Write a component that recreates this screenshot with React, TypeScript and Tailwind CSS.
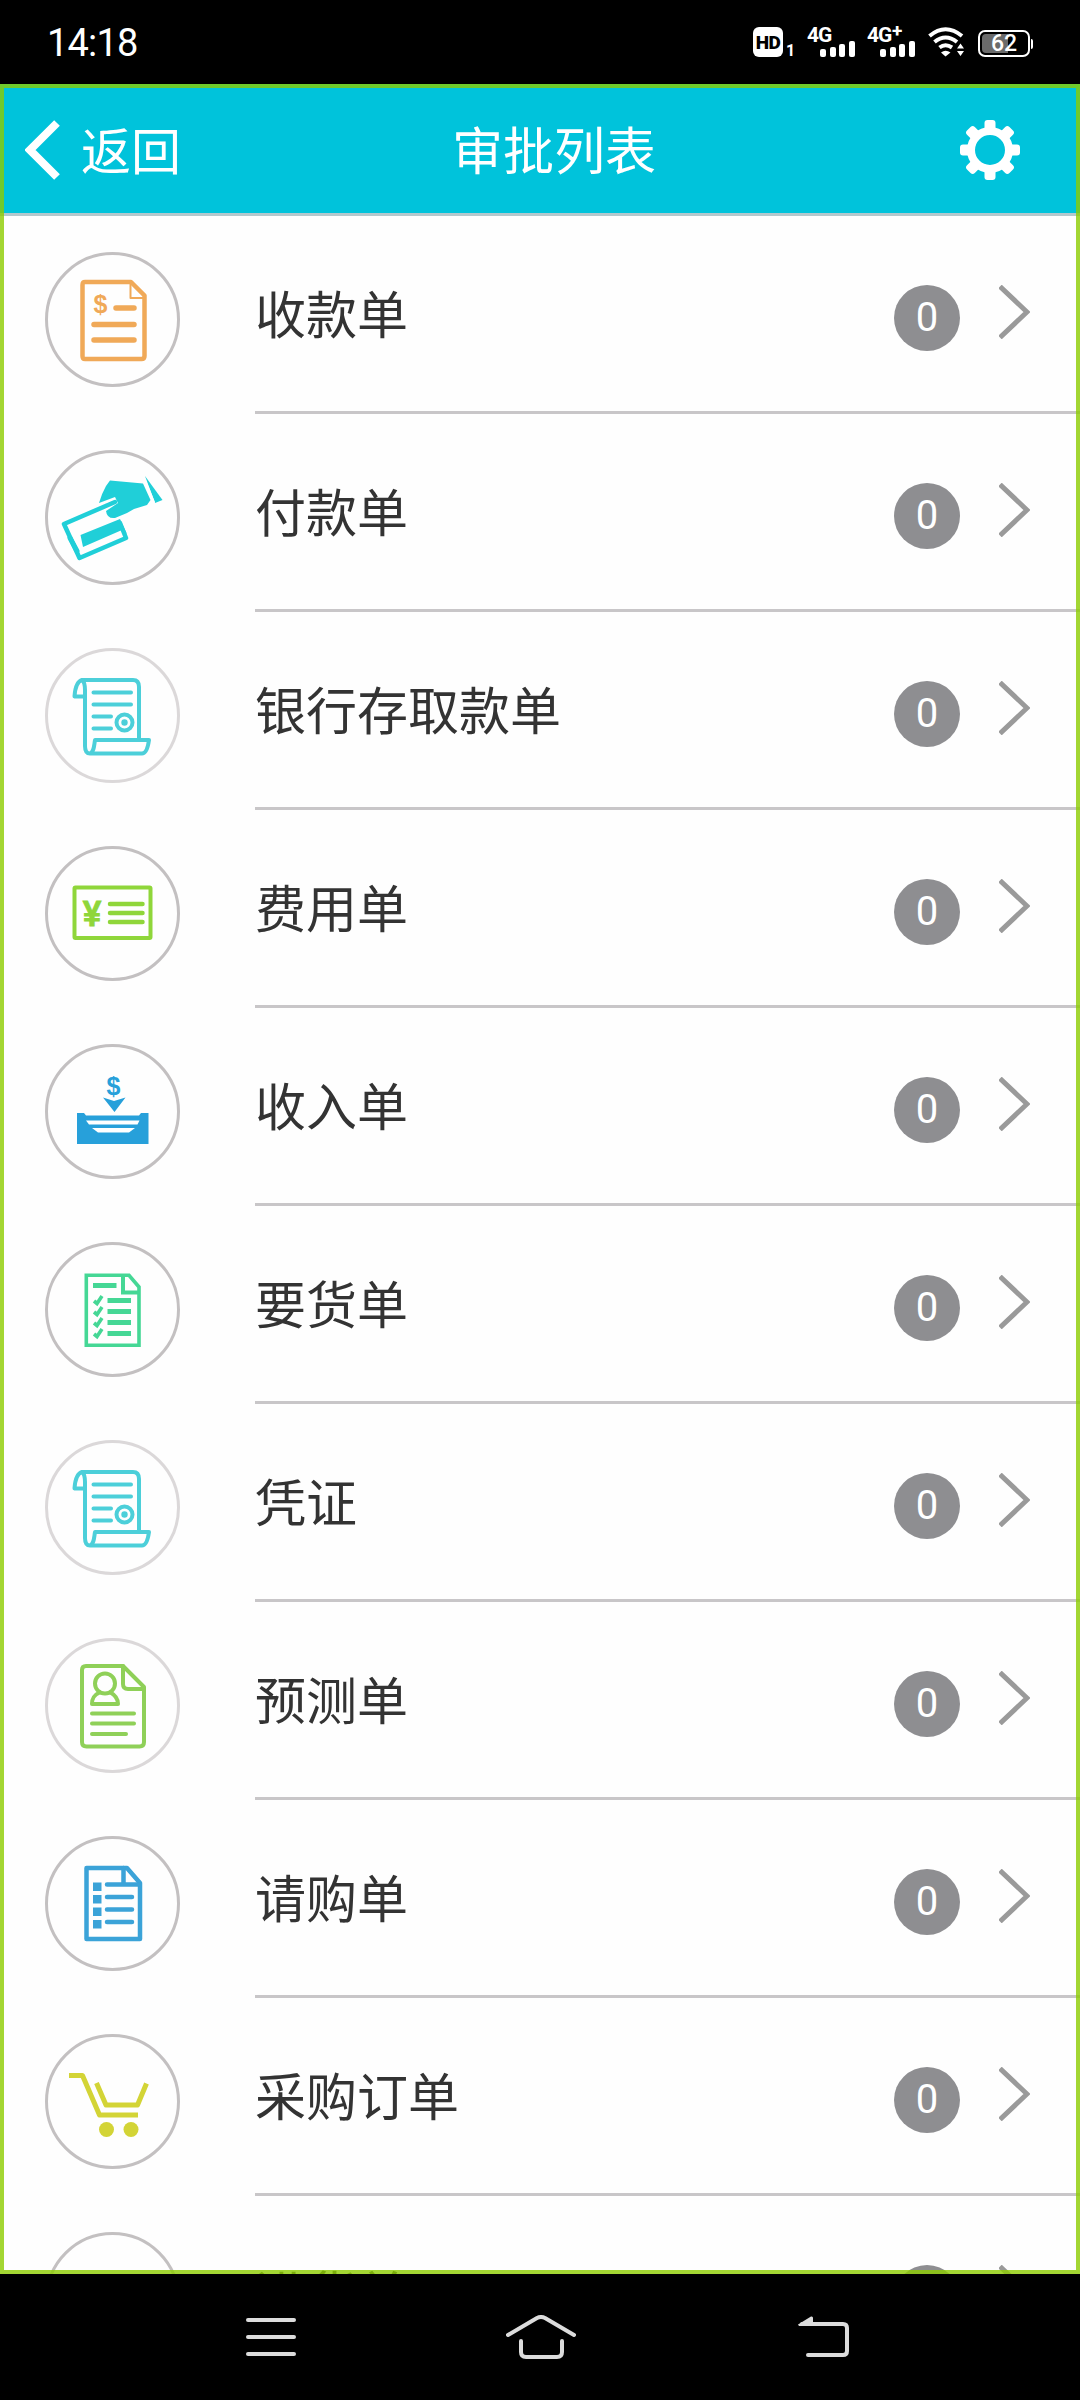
import type { ReactNode } from "react"

const stroke = {
  fill: "none",
  stroke: "currentColor",
  strokeLinecap: "round",
  strokeLinejoin: "round",
} as const

function ReceiptIcon() {
  return (
    <svg viewBox="0 0 135 135" className="w-full h-full text-[#f0a958]">
      <g {...stroke} strokeWidth="4.5">
        <path d="M40 30H86L99.5 43.5V104Q99.5 107 96.5 107H40Q37.5 107 37.5 104V33Q37.5 30 40 30Z" />
        <path d="M85.5 31V46H99" strokeWidth="2" />
        <path d="M71 56H89M49 72.5H89M49 88H89" strokeWidth="5.5" />
      </g>
      <text x="55.5" y="61" textAnchor="middle" fontSize="25" fontWeight="700" fill="currentColor" className="font-['Liberation_Sans',sans-serif]">
        $
      </text>
    </svg>
  )
}

function PayCardIcon() {
  return (
    <svg viewBox="0 0 135 135" className="w-full h-full text-[#20cfd8]">
      <path {...stroke} strokeWidth="4.5" d="M70 52L19 74L34.5 108L81 88L75 73" />
      <path {...stroke} strokeWidth="5" d="M25 88L32 101" />
      <path fill="currentColor" d="M35.500 85L75 69L82 84L77 80L38 97Z" />
      <path fill="currentColor" d="M65 30.5L98 33.5L105.5 50L102 55L89 59L82 63L70 68Q62 69 61 61L73 53L70 47L54 53Q57 43 61 36Z" />
      <path fill="currentColor" d="M100 26L117.5 50L110 53Z" />
      <path d="M100 31L109 53" stroke="#fff" strokeWidth="2.5" />
    </svg>
  )
}

function ScrollIcon() {
  return (
    <svg viewBox="0 0 135 135" className="w-full h-full text-[#4ccfd9]">
      <g {...stroke} strokeWidth="4">
        <path d="M37.5 32H88Q94 32 94 39V91" />
        <path d="M37.5 32C32 33 30 41 29.5 48.5H39" />
        <path d="M37.5 32C40 35 40 38 40 42V98Q40 105.5 45 105.5C49 104 49 98 50 92H104C103 99 101 105.5 97 105.5H45" />
        <path d="M48.5 44.5H86M48.5 56.5H86M48.5 68.5H66M48.5 80.5H66" />
        <circle cx="79.5" cy="74.5" r="8" />
      </g>
      <circle cx="79.5" cy="74.5" r="3.2" fill="currentColor" />
    </svg>
  )
}

function YuanBillIcon() {
  return (
    <svg viewBox="0 0 135 135" className="w-full h-full text-[#8fd63a]">
      <g {...stroke} strokeWidth="4">
        <rect x="29.5" y="41.5" width="76" height="50.5" rx="1" />
        <path d="M65 58H97.5M65 67H97.5M65 76H97.5" strokeWidth="4.5" />
      </g>
      <text x="47" y="80" textAnchor="middle" fontSize="35" fontWeight="500" stroke="currentColor" fill="currentColor" className="font-['Roboto',sans-serif]">
        ¥
      </text>
    </svg>
  )
}

function IncomeIcon() {
  return (
    <svg viewBox="0 0 135 135" className="w-full h-full text-[#27a0da]">
      <text x="68.5" y="51" textAnchor="middle" fontSize="25" fontWeight="700" fill="currentColor" className="font-['Liberation_Sans',sans-serif]">
        $
      </text>
      <path fill="currentColor" d="M58 53.5L69 57L80.5 53.5L69.5 68Z" />
      <path fill="currentColor" d="M32 69H39L41 71.5H94L96 69H103.5V100H32Z" />
      <path fill="#fff" d="M41 76.5H94.5L92.5 80.5H44Z" />
      <path fill="#fff" d="M47 84H90L84 88.5H53Z" />
    </svg>
  )
}

function ChecklistIcon() {
  return (
    <svg viewBox="0 0 135 135" className="w-full h-full text-[#45d795]">
      <g fill="none" stroke="currentColor" strokeWidth="3.6">
        <path d="M41.3 33.3H84L94 45V103.2H41.3Z" />
        <path d="M78 33V50.5H94" strokeWidth="4" />
        <path d="M48 43.5H71.5M62.5 58.5H86M62.5 69.5H86M62.5 80.5H86M62.5 91.5H86" strokeWidth="5" />
        <path d="M49 59L52 61.5L57 54M49 70L52 72.5L57 65M49 81L52 83.5L57 76M49 92L52 94.5L57 87" />
      </g>
    </svg>
  )
}

function ProfileDocIcon() {
  return (
    <svg viewBox="0 0 135 135" className="w-full h-full text-[#8fd058]">
      <g {...stroke} strokeWidth="4">
        <path d="M41 28H78L99 49V104Q99 108.5 94.5 108.5H41.5Q37 108.5 37 104V32Q37 28 41 28Z" />
        <path d="M78 28V46Q78 51 83 51H99" />
        <circle cx="60" cy="45.5" r="10" />
        <path d="M54.5 54.5C49 57 47 60 47 66H73C73 60 70 57 65.5 54.5" />
        <path d="M47 75.5H89M47 85.5H89M47 96H81" />
      </g>
    </svg>
  )
}

function ListDocIcon() {
  return (
    <svg viewBox="0 0 135 135" className="w-full h-full text-[#3ba3d8]">
      <g {...stroke} strokeWidth="4.5">
        <path d="M41.5 32H82L95 47V103H41.5Z" />
        <path d="M78.5 32V48.5M62 48.5H94M62 61H87M62 73.5H87M62 86H87" />
      </g>
      <path fill="currentColor" d="M48 46.5h8.5v8.5h-8.5zM48 59h8.5v8.5h-8.5zM48 71.5h8.5v8.5h-8.5zM48 84h8.5v8.5h-8.5z" />
    </svg>
  )
}

function CartIcon() {
  return (
    <svg viewBox="0 0 135 135" className="w-full h-full text-[#d3d436]">
      <g {...stroke} strokeWidth="5" strokeLinecap="butt">
        <path d="M24 41.5H37.5L54.5 81H93" />
        <path d="M51.5 49L61 71H92.5L101.5 49.5" />
      </g>
      <circle cx="61.5" cy="95.5" r="7.5" fill="currentColor" />
      <circle cx="86" cy="95.5" r="7.5" fill="currentColor" />
    </svg>
  )
}

interface Item {
  label: string
  count?: number
  icon?: ReactNode
  pale?: boolean
}

const items: Item[] = [
  { label: "收款单", count: 0, icon: <ReceiptIcon /> },
  { label: "付款单", count: 0, icon: <PayCardIcon /> },
  { label: "银行存取款单", count: 0, icon: <ScrollIcon />, pale: true },
  { label: "费用单", count: 0, icon: <YuanBillIcon /> },
  { label: "收入单", count: 0, icon: <IncomeIcon /> },
  { label: "要货单", count: 0, icon: <ChecklistIcon /> },
  { label: "凭证", count: 0, icon: <ScrollIcon />, pale: true },
  { label: "预测单", count: 0, icon: <ProfileDocIcon />, pale: true },
  { label: "请购单", count: 0, icon: <ListDocIcon /> },
  { label: "采购订单", count: 0, icon: <CartIcon /> },
  { label: "进货单" },
]

function Signal({ label, plus }: { label: string; plus?: boolean }) {
  return (
    <div className="relative w-[48px] h-[30px]">
      <span className="absolute left-0 -top-[2px] text-[21px] leading-[20px] font-bold tracking-[-1px] font-['Roboto',sans-serif]">{label}</span>
      {plus && <span className="absolute left-[25px] -top-[6px] text-[19px] leading-[20px] font-bold font-['Roboto',sans-serif]">+</span>}
      <div className="absolute right-0 bottom-0 flex items-end gap-[3.7px]">
        <div className="w-[6px] h-[8px] rounded-[2px] bg-white" />
        <div className="w-[6px] h-[10px] rounded-[2px] bg-white" />
        <div className="w-[6px] h-[13px] rounded-[2px] bg-white" />
        <div className="w-[6px] h-[16px] rounded-[2px] bg-white" />
      </div>
    </div>
  )
}

function StatusBar() {
  return (
    <div className="h-[84px] shrink-0 flex items-center bg-black text-white pl-[47px] pr-[47px]">
      <span className="text-[38px] leading-none tracking-[-0.8px] mt-px font-['Roboto',sans-serif]">14:18</span>
      <div className="ml-auto flex items-center">
        <div className="w-[30px] h-[30px] rounded-[6px] bg-white text-black flex items-center justify-center text-[19px] leading-none font-black tracking-[-0.5px] font-['Roboto',sans-serif]">
          HD
        </div>
        <span className="w-[24px] pl-[3px] mt-[17px] text-[16px] leading-none font-bold font-['Roboto',sans-serif]">1</span>
        <Signal label="4G" />
        <div className="w-[12px]" />
        <Signal label="4G" plus />
        <svg viewBox="0 0 36 30" className="w-[36px] h-[30px] ml-[13px]" fill="none" stroke="#fff">
          <path d="M1.5 9Q17.5 -4.5 34 9" strokeWidth="4" />
          <path d="M6.5 15Q17.5 6 29 15" strokeWidth="4" />
          <path d="M11.5 20.5Q17.5 16 24 20.5" strokeWidth="4" />
          <path d="M13 25.5Q17.5 22 22.5 25.5L17.5 29.5Z" fill="#fff" stroke="none" />
          <path d="M29 21.5L32.5 16.5L36 21.5ZM29 24L32.5 29L36 24Z" fill="#fff" stroke="none" />
        </svg>
        <div className="relative flex ml-[14px] mt-[3px] w-[52px] h-[27px] rounded-[7px] border-2 border-white p-[2px]">
          <div className="w-[26px] h-full rounded-l-[4px] bg-[#6b6b6b]" />
          <span className="absolute inset-0 flex items-center justify-center text-[23px] leading-none font-medium font-['Roboto',sans-serif]">62</span>
        </div>
        <div className="w-[2px] h-[10px] ml-px mt-[3px] rounded-r bg-white" />
      </div>
    </div>
  )
}

function Header() {
  return (
    <div className="h-[132px] shrink-0 grid grid-cols-3 items-center bg-[#00c3db] border-b-[3px] border-[#b3c8cd] text-white text-[51px] leading-none">
      <div className="flex items-center pl-[25px]">
        <svg viewBox="0 0 36 60" className="w-[36px] h-[60px] mt-[3px]">
          <path d="M32 3L5 30L32 57" fill="none" stroke="#fff" strokeWidth="8" />
        </svg>
        <span className="ml-[20px] -mt-px text-[50px]">返回</span>
      </div>
      <h1 className="text-center pl-[28px] -mt-px whitespace-nowrap">审批列表</h1>
      <svg viewBox="-30 -30 60 60" className="w-[60px] h-[60px] ml-auto mr-[60px] mt-[3px]">
        <circle r="19" fill="none" stroke="#fff" strokeWidth="8" />
        {[0, 45, 90, 135, 180, 225, 270, 315].map((deg) => (
          <rect key={deg} x="-5.5" y="-30" width="11" height="12" rx="3" fill="#fff" transform={`rotate(${deg})`} />
        ))}
      </svg>
    </div>
  )
}

function Row({ item }: { item: Item }) {
  return (
    <div className="h-[198px] shrink-0 flex pl-[45px]">
      <div className={`mt-[36px] w-[135px] h-[135px] rounded-full border-[3px] ${item.pale ? "border-[#dbd8d9]" : "border-[#c3c0c1]"}`}>
        <div className="-m-[3px] w-[135px] h-[135px]">{item.icon}</div>
      </div>
      <div className="ml-[75px] flex-1 flex border-b-[3px] border-[#c8c6c8]">
        <span className="mt-[71px] text-[51px] leading-[51px] text-[#333]">{item.label}</span>
        <div className="ml-auto mt-[69px] w-[66px] h-[66px] rounded-full bg-[#8e8e91] text-white text-[40px] leading-none flex items-center justify-center font-['Roboto',sans-serif]">
          {item.count}
        </div>
        <svg viewBox="0 0 31 54" className="w-[31px] h-[54px] mt-[69px] ml-[39px] mr-[50px]">
          <path d="M1 1.5L28 27L1 52.5" fill="none" stroke="#9a9a9a" strokeWidth="5" />
        </svg>
      </div>
    </div>
  )
}

function NavBar() {
  return (
    <div className="h-[126px] shrink-0 bg-black flex items-center pl-[246px] pb-[1px] text-[#dcdcdc]">
      <div className="w-[50px] flex flex-col gap-[13px]">
        <div className="h-[4px] rounded-full bg-current" />
        <div className="h-[4px] rounded-full bg-current" />
        <div className="h-[4px] rounded-full bg-current" />
      </div>
      <svg viewBox="0 0 70 44" className="w-[70px] h-[44px] ml-[210px]">
        <g {...stroke} strokeWidth="4">
          <path d="M2 20L31 3Q35 1 39 3L68 20" />
          <path d="M15 26V37Q15 42 20 42H51Q56 42 56 37V26" />
        </g>
      </svg>
      <svg viewBox="0 0 52 42" className="w-[52px] h-[42px] ml-[222px]">
        <path {...stroke} strokeWidth="4" d="M4 8H45Q49 8 49 12V35Q49 39 45 39H10" />
        <path fill="currentColor" d="M0 8.5L13 0.5Q15 0 15 2V10H1Z" />
      </svg>
    </div>
  )
}

export default function App() {
  return (
    <div className="w-[1080px] h-[2400px] flex flex-col overflow-hidden bg-black font-['Noto_Sans_CJK_SC',sans-serif]">
      <StatusBar />
      <div className="relative h-[2190px] shrink-0 overflow-hidden flex flex-col bg-[#fefefe]">
        <Header />
        {items.map((item) => (
          <Row key={item.label} item={item} />
        ))}
        {/* translucent frame over the list */}
        <div className="absolute inset-0 border-4 border-[#8ccc00]/80 pointer-events-none" />
      </div>
      <NavBar />
    </div>
  )
}
